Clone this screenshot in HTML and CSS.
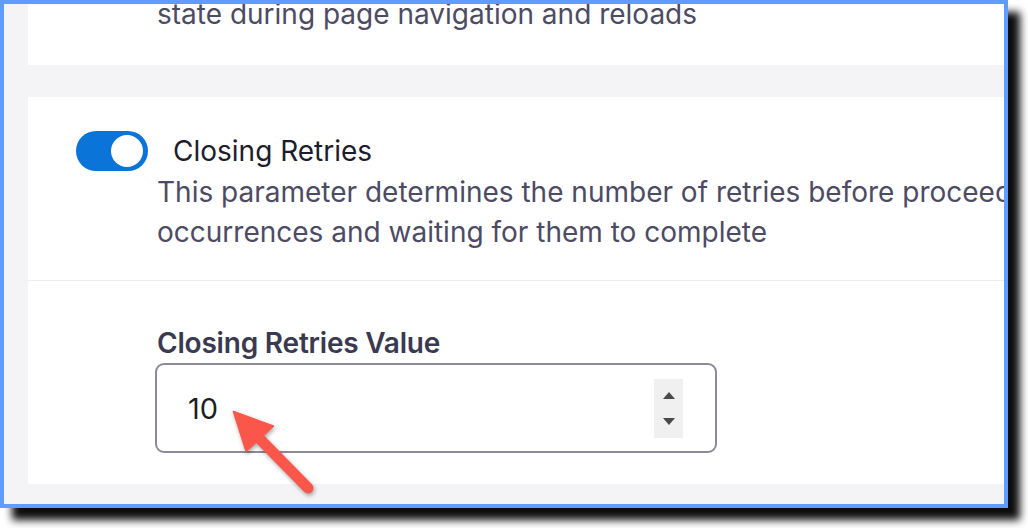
FILE: index.html
```html
<!DOCTYPE html>
<html lang="en">
<head>
<meta charset="utf-8">
<title>Closing Retries</title>
<link rel="stylesheet" href="styles.css">
</head>
<body>
<div class="frame">
  <div class="screen">
    <section class="card card-top">
      <p class="desc">state during page navigation and reloads</p>
    </section>
    <section class="card card-main">
      <div class="setting">
        <div class="setting-head">
          <span class="toggle"><span class="knob"></span></span>
          <span class="title">Closing Retries</span>
        </div>
        <p class="desc setting-desc">This parameter determines the number of retries before proceeding with closing<br>occurrences and waiting for them to complete</p>
      </div>
      <div class="field">
        <label class="label">Closing Retries Value</label>
        <div class="input">
          <span class="value">10</span>
          <span class="spin">
            <svg width="12" height="7" viewBox="0 0 12 7"><path d="M0 7 L6 0 L12 7 Z" fill="#4a4a4a"/></svg>
            <svg width="12" height="7" viewBox="0 0 12 7"><path d="M0 0 L6 7 L12 0 Z" fill="#4a4a4a"/></svg>
          </span>
        </div>
      </div>
    </section>
  </div>
  <svg class="arrow" width="110" height="100" viewBox="0 0 110 100">
    <line x1="36" y1="35" x2="88" y2="88" stroke="#fa574a" stroke-width="11" stroke-linecap="round"/>
    <polygon points="13,11 54,26 26,52" fill="#fa574a" stroke="#fa574a" stroke-width="1" stroke-linejoin="round"/>
  </svg>
</div>
</body>
</html>
```

FILE: styles.css
```css
html, body {
  margin: 0;
  padding: 0;
  background: #ffffff;
}

body {
  width: 1028px;
  height: 528px;
  overflow: hidden;
  font-family: "Inter", "Noto Sans", sans-serif;
}

.frame {
  position: relative;
  width: 1000px;
  height: 500px;
  border: 4px solid #609cff;
  box-shadow: 12px 12px 8px rgba(0, 0, 0, 0.95);
}

.screen {
  width: 1000px;
  height: 500px;
  overflow: hidden;
  background: #f4f4f6;
  display: flex;
  flex-direction: column;
  gap: 32px;
  padding-left: 24px;
  box-sizing: border-box;
}

.card {
  background: #ffffff;
  width: 1300px;
  flex-shrink: 0;
}

.card-top {
  height: 61px;
  display: flex;
  align-items: flex-end;
  padding-left: 129px;
  box-sizing: border-box;
  padding-bottom: 31px;
}

.desc {
  margin: 0;
  font-size: 28px;
  line-height: 40px;
  color: #4d4b64;
  white-space: nowrap;
}

.card-main {
  height: 387px;
  display: flex;
  flex-direction: column;
}

.setting {
  padding: 34px 0 28px 48px;
  border-bottom: 1px solid #ecebf1;
}

.setting-head {
  display: flex;
  align-items: center;
  gap: 25px;
  height: 40px;
}

.toggle {
  width: 72px;
  height: 40px;
  border-radius: 20px;
  background: #0b74d9;
  display: flex;
  align-items: center;
  justify-content: flex-end;
  padding-right: 5px;
  box-sizing: border-box;
}

.knob {
  width: 32px;
  height: 32px;
  border-radius: 50%;
  background: #ffffff;
}

.title {
  font-size: 28px;
  color: #1e1d2d;
}

.setting-desc {
  margin-left: 81px;
  margin-top: 1px;
}

.field {
  padding: 46px 0 0 127px;
  display: flex;
  flex-direction: column;
  gap: 3px;
}

.label {
  font-size: 28px;
  line-height: 33px;
  font-weight: 600;
  letter-spacing: -0.2px;
  color: #3a394f;
  padding-left: 2px;
}

.input {
  width: 562px;
  height: 90px;
  box-sizing: border-box;
  border: 2px solid #8e8a9d;
  border-radius: 9px;
  display: flex;
  align-items: center;
  justify-content: space-between;
  padding: 0 32px 0 31px;
}

.value {
  font-size: 29px;
  color: #1f1f1f;
}

.spin {
  width: 29px;
  height: 59px;
  background: #f0f0f0;
  display: flex;
  flex-direction: column;
  align-items: center;
  justify-content: center;
  gap: 19px;
}

.spin svg {
  display: block;
}

.arrow {
  position: absolute;
  left: 216px;
  top: 396px;
  filter: drop-shadow(1px 2px 2px rgba(0, 0, 0, 0.35));
  pointer-events: none;
}
```
